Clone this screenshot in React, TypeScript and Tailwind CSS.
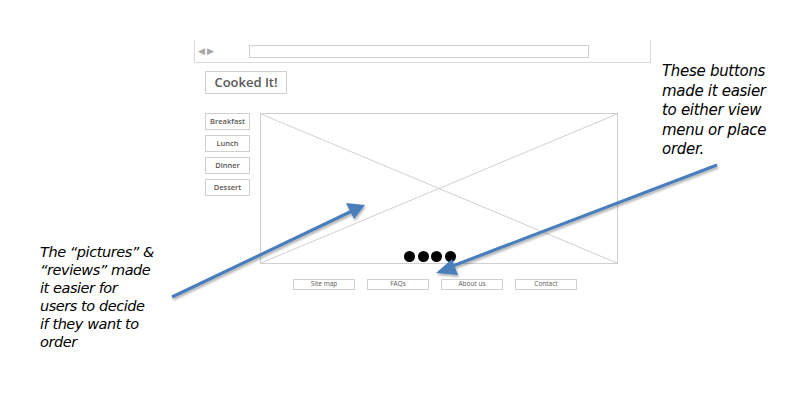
const sideItems = ["Breakfast", "Lunch", "Dinner", "Dessert"];
const footerItems = ["Site map", "FAQs", "About us", "Contact"];

const Arrows = () => (
  <svg
    className="absolute left-0 top-0 pointer-events-none"
    width="794"
    height="415"
    viewBox="0 0 794 415"
  >
    <defs>
      <filter id="sh" x="-10%" y="-10%" width="120%" height="130%">
        <feDropShadow dx="1" dy="2" stdDeviation="1.2" floodColor="#000" floodOpacity="0.3" />
      </filter>
    </defs>
    <g filter="url(#sh)" fill="#4a7ebb" stroke="#4a7ebb">
      {/* pictures & reviews arrow */}
      <line x1="172" y1="297" x2="352" y2="211" strokeWidth="3.2" />
      <polygon points="365,205 346,203 354,219" stroke="none" />
      {/* buttons arrow */}
      <line x1="717" y1="165" x2="450" y2="267" strokeWidth="3.2" />
      <polygon points="436,273 452,259 458,275" stroke="none" />
    </g>
  </svg>
);

export default function App() {
  return (
    <div className="relative w-[794px] h-[415px] bg-white overflow-hidden">
      <div className="pt-[40px] pl-[194px] font-['Open_Sans',sans-serif] text-[#595959]">
        {/* browser chrome */}
        <div className="flex items-center w-[457px] h-[23px] border-l border-r border-b border-[#d9d9d9]">
          <span className="ml-[3px] w-[24px] flex gap-[2px] text-[9px] leading-none text-[#a6a6a6] font-['DejaVu_Sans',sans-serif]">
            <span>◀</span>
            <span>▶</span>
          </span>
          <div className="ml-[27px] w-[340px] h-[13px] border border-[#d0d0d0]" />
        </div>

        {/* logo */}
        <div className="ml-[11px] mt-[8px] flex items-center justify-center w-[82px] h-[23px] border border-[#d0d0d0] text-[13px] font-semibold">
          Cooked It!
        </div>

        <div className="mt-[19px] ml-[11px] flex gap-[10px]">
          <div className="flex flex-col gap-[5px]">
            {sideItems.map((s) => (
              <div
                key={s}
                className="flex items-center justify-center w-[45px] h-[17px] border border-[#d0d0d0] text-[7.5px] font-semibold"
              >
                {s}
              </div>
            ))}
          </div>

          {/* picture placeholder */}
          <div className="relative w-[358px] h-[151px] border border-[#d0d0d0]">
            <svg className="absolute inset-0" width="356" height="149" viewBox="0 0 356 149">
              <line x1="0" y1="0" x2="356" y2="149" stroke="#d0d0d0" strokeWidth="1" />
              <line x1="356" y1="0" x2="0" y2="149" stroke="#d0d0d0" strokeWidth="1" />
            </svg>
            <div className="absolute left-[143px] bottom-[1px] flex gap-[2.5px]">
              {[0, 1, 2, 3].map((i) => (
                <span key={i} className="block w-[11px] h-[11px] rounded-full bg-black" />
              ))}
            </div>
          </div>
        </div>

        {/* footer */}
        <div className="mt-[15px] ml-[99px] flex gap-[12px]">
          {footerItems.map((f) => (
            <div
              key={f}
              className="flex items-center justify-center w-[62px] h-[11px] border border-[#d0d0d0] text-[6.5px] leading-none"
            >
              {f}
            </div>
          ))}
        </div>
      </div>

      {/* annotations */}
      <p className="absolute left-[662px] top-[62px] text-[15px] leading-[19.5px] italic text-black font-['DejaVu_Sans',sans-serif] tracking-[-0.3px] whitespace-nowrap">
        These buttons
        <br />
        made it easier
        <br />
        to either view
        <br />
        menu or place
        <br />
        order.
      </p>
      <p className="absolute left-[40px] top-[243px] text-[14.5px] leading-[18px] italic text-black font-['DejaVu_Sans',sans-serif] tracking-[-0.45px] whitespace-nowrap">
        The “pictures” &amp;
        <br />
        “reviews” made
        <br />
        it easier for
        <br />
        users to decide
        <br />
        if they want to
        <br />
        order
      </p>

      <Arrows />
    </div>
  );
}
